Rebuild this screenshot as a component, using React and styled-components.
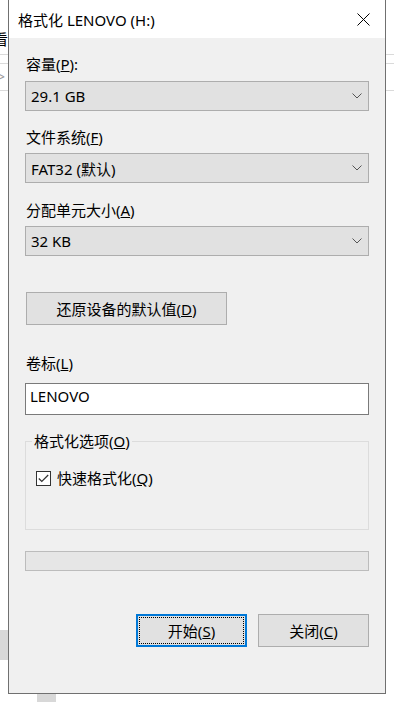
import React from 'react';
import styled, { createGlobalStyle } from 'styled-components';

const GlobalStyle = createGlobalStyle`
  html, body {
    margin: 0;
    padding: 0;
    background: #ffffff;
  }
  body {
    font-family: "Noto Sans", "Noto Sans CJK SC", sans-serif;
    font-size: 15px;
    color: #000;
  }
`;

const Desktop = styled.div`
  position: relative;
  width: 394px;
  height: 702px;
  overflow: hidden;
  background: #ffffff;
`;

// bits of the window behind the dialog
const BackLine = styled.div`
  position: absolute;
  top: ${p => p.top}px;
  left: 0;
  right: 0;
  height: 1px;
  background: #dadada;
`;

const BackGlyph = styled.div`
  position: absolute;
  left: -7px;
  top: 30px;
  font-size: 15px;
  line-height: 18px;
`;

const BackChevron = styled.div`
  position: absolute;
  left: -3px;
  top: 67px;
  color: #9a9a9a;
  font-size: 14px;
`;

const BackBlock = styled.div`
  position: absolute;
  left: ${p => p.x}px;
  top: ${p => p.y}px;
  width: ${p => p.w}px;
  height: ${p => p.h}px;
  background: #d8d8d8;
`;

const Window = styled.div`
  position: relative;
  margin-left: 8px;
  width: 378px;
  height: 694px;
  box-sizing: border-box;
  border: 1px solid #707070;
  border-top: none;
  display: flex;
  flex-direction: column;
  background: #f0f0f0;
`;

const TitleBar = styled.div`
  height: 38px;
  background: #ffffff;
  display: flex;
  align-items: center;
  justify-content: space-between;
  padding-left: 9px;
  flex-shrink: 0;
`;

const Title = styled.div`
  font-size: 15px;
  line-height: 20px;
  margin-top: 1px;
`;

const CloseBtn = styled.div`
  width: 44px;
  height: 38px;
  display: flex;
  align-items: center;
  justify-content: center;
`;

const Body = styled.div`
  flex: 1;
  padding: 0 16px;
  display: flex;
  flex-direction: column;
`;

const Label = styled.div`
  line-height: 20px;
  height: 20px;
  margin-top: ${p => p.mt}px;
  padding-left: 1px;
`;

const Select = styled.div`
  margin-top: ${p => p.mt}px;
  height: 30px;
  box-sizing: border-box;
  border: 1px solid #adadad;
  background: #e1e1e1;
  display: flex;
  align-items: center;
  justify-content: space-between;
  padding: 0 6px 0 5px;
`;

const Button = styled.div`
  height: 33px;
  box-sizing: border-box;
  width: ${p => p.w}px;
  border: ${p => (p.focused ? '2px solid #0078d7' : '1px solid #adadad')};
  background: #e1e1e1;
  display: flex;
  align-items: center;
  justify-content: center;
  position: relative;
  line-height: 20px;
`;

const FocusRing = styled.div`
  position: absolute;
  inset: 1px;
  border: 1px dotted #000;
`;

const RestoreButton = styled(Button)`
  margin-top: 36px;
  margin-left: 1px;
`;

const TextInput = styled.div`
  margin-top: 10px;
  height: 32px;
  box-sizing: border-box;
  border: 1px solid #7a7a7a;
  background: #ffffff;
  display: flex;
  align-items: center;
  padding-left: 4px;
  padding-bottom: 6px;
`;

const Group = styled.div`
  position: relative;
  margin-top: 26px;
  height: 89px;
  box-sizing: border-box;
  border: 1px solid #dcdcdc;
  padding: 26px 0 0 10px;
`;

const Legend = styled.div`
  position: absolute;
  top: -11px;
  left: 6px;
  padding: 0 2px;
  line-height: 20px;
  background: #f0f0f0;
`;

const CheckRow = styled.div`
  display: flex;
  align-items: center;
  gap: 6px;
  line-height: 20px;
`;

const CheckBox = styled.div`
  width: 15px;
  height: 15px;
  box-sizing: border-box;
  border: 1px solid #333333;
  background: #ffffff;
  display: flex;
  align-items: center;
  justify-content: center;
`;

const Progress = styled.div`
  margin-top: 21px;
  height: 20px;
  box-sizing: border-box;
  border: 1px solid #bcbcbc;
  background: #e6e6e6;
`;

const ButtonRow = styled.div`
  margin-top: 43px;
  display: flex;
  justify-content: flex-end;
  gap: 11px;
`;

const Chevron = () => (
  <svg width="10" height="6" viewBox="0 0 10 6">
    <polyline points="0.5,0.5 5,5 9.5,0.5" fill="none" stroke="#555" strokeWidth="1" />
  </svg>
);

const ComboBox = ({ mt, value }) => (
  <Select mt={mt}>
    <span>{value}</span>
    <Chevron />
  </Select>
);

export default function App() {
  return (
    <>
      <GlobalStyle />
      <Desktop>
        <BackGlyph>看</BackGlyph>
        <BackLine top={54} />
        <BackLine top={63} />
        <BackLine top={90} />
        <BackChevron>&gt;</BackChevron>
        <BackBlock x={0} y={630} w={8} h={30} />
        <BackBlock x={37} y={694} w={19} h={8} />

        <Window>
          <TitleBar>
            <Title>格式化 LENOVO (H:)</Title>
            <CloseBtn>
              <svg width="13" height="13" viewBox="0 0 13 13">
                <path d="M0.5 0.5 L12.5 12.5 M12.5 0.5 L0.5 12.5" stroke="#000" strokeWidth="1" />
              </svg>
            </CloseBtn>
          </TitleBar>

          <Body>
            <Label mt={16}>容量(<u>P</u>):</Label>
            <ComboBox mt={7} value="29.1 GB" />

            <Label mt={16}>文件系统(<u>F</u>)</Label>
            <ComboBox mt={6} value="FAT32 (默认)" />

            <Label mt={17}>分配单元大小(<u>A</u>)</Label>
            <ComboBox mt={6} value="32 KB" />

            <RestoreButton w={201}>还原设备的默认值(<u>D</u>)</RestoreButton>

            <Label mt={28}>卷标(<u>L</u>)</Label>
            <TextInput>LENOVO</TextInput>

            <Group>
              <Legend>格式化选项(<u>O</u>)</Legend>
              <CheckRow>
                <CheckBox>
                  <svg width="11" height="9" viewBox="0 0 11 9">
                    <polyline points="0.8,4.5 3.8,7.5 10.2,1" fill="none" stroke="#333" strokeWidth="1.2" />
                  </svg>
                </CheckBox>
                <span>快速格式化(<u>Q</u>)</span>
              </CheckRow>
            </Group>

            <Progress />

            <ButtonRow>
              <Button w={111} focused>
                <FocusRing />
                开始(<u>S</u>)
              </Button>
              <Button w={111}>关闭(<u>C</u>)</Button>
            </ButtonRow>
          </Body>
        </Window>
      </Desktop>
    </>
  );
}
